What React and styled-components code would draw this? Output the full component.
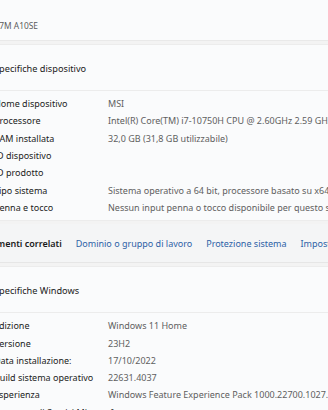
import styled, { createGlobalStyle } from "styled-components";

const GlobalStyle = createGlobalStyle`
  html, body {
    margin: 0;
    padding: 0;
    background: #f3f3f3;
  }
  body {
    font-family: "Noto Sans", "Open Sans", sans-serif;
    -webkit-font-smoothing: antialiased;
  }
`;

const deviceSpecs = [
  ["Nome dispositivo", "MSI"],
  ["Processore", "Intel(R) Core(TM) i7-10750H CPU @ 2.60GHz   2.59 GHz"],
  ["RAM installata", "32,0 GB (31,8 GB utilizzabile)"],
  ["ID dispositivo", ""],
  ["ID prodotto", ""],
  ["Tipo sistema", "Sistema operativo a 64 bit, processore basato su x64"],
  ["Penna e tocco", "Nessun input penna o tocco disponibile per questo schermo"],
];

const windowsSpecs = [
  ["Edizione", "Windows 11 Home"],
  ["Versione", "23H2"],
  ["Data installazione:", "17/10/2022"],
  ["Build sistema operativo", "22631.4037"],
  ["Esperienza", "Windows Feature Experience Pack 1000.22700.1027.0"],
  ["Contratto di Servizi Microsoft", ""],
];

const App = () => {
  return (
    <>
      <GlobalStyle />
      <Viewport>
        <Content>
          <TopCard>
            <ModelText>GP76 Leopard 17M A10SE</ModelText>
          </TopCard>

          <Card>
            <Header>Specifiche dispositivo</Header>
            <Divider />
            <Rows>
              {deviceSpecs.map(([label, value]) => (
                <Row key={label}>
                  <Label>{label}</Label>
                  <Value>{value}</Value>
                </Row>
              ))}
            </Rows>
          </Card>

          <Related>
            <RelatedTitle>Collegamenti correlati</RelatedTitle>
            <Link>Dominio o gruppo di lavoro</Link>
            <Link>Protezione sistema</Link>
            <Link>Impostazioni di sistema avanzate</Link>
          </Related>

          <Card>
            <Header>Specifiche Windows</Header>
            <Divider />
            <Rows>
              {windowsSpecs.map(([label, value]) => (
                <Row key={label}>
                  <Label>{label}</Label>
                  <Value>{value}</Value>
                </Row>
              ))}
            </Rows>
          </Card>
        </Content>
      </Viewport>
    </>
  );
};

const Viewport = styled.div`
  width: 328px;
  height: 410px;
  overflow: hidden;
  background: #f3f3f3;
`;

const Content = styled.div`
  margin-left: -45px;
  width: 600px;
  display: flex;
  flex-direction: column;
  gap: 3px;
`;

const TopCard = styled.div`
  height: 41px;
  background: #fafbfc;
  border-bottom: 1px solid #e9e9e9;
  display: flex;
  align-items: center;
  padding-top: 10px;
  box-sizing: border-box;
`;

const ModelText = styled.div`
  width: 83px;
  text-align: right;
  white-space: nowrap;
  direction: rtl;
  overflow: hidden;
  font-size: 8.4px;
  color: #5c5c5c;
`;

const Card = styled.div`
  background: #fafbfc;
  border-top: 1px solid #ececec;
  border-bottom: 1px solid #ececec;
`;

const Header = styled.div`
  height: 45px;
  display: flex;
  align-items: center;
  padding-left: 39px;
  padding-top: 1px;
  box-sizing: border-box;
  font-size: 9.2px;
  color: #1a1a1a;
`;

const Divider = styled.div`
  height: 1px;
  background: #ececec;
`;

const Rows = styled.div`
  padding: 4px 0 4px 39px;
  display: flex;
  flex-direction: column;
`;

const Row = styled.div`
  display: grid;
  grid-template-columns: 114px 1fr;
  height: 17.3px;
  align-items: center;
  font-size: 9px;
  white-space: nowrap;
`;

const Label = styled.div`
  color: #1b1b1b;
`;

const Value = styled.div`
  color: #606060;
`;

const Related = styled.div`
  height: 38px;
  background: #f4f5f6;
  border-bottom: 1px solid #e6e6e6;
  display: flex;
  align-items: center;
  padding-left: 9px;
  gap: 14px;
  white-space: nowrap;
  font-size: 9px;
`;

const RelatedTitle = styled.div`
  font-weight: 600;
  color: #1b1b1b;
`;

const Link = styled.div`
  color: #2d62a6;
`;

export default App;
